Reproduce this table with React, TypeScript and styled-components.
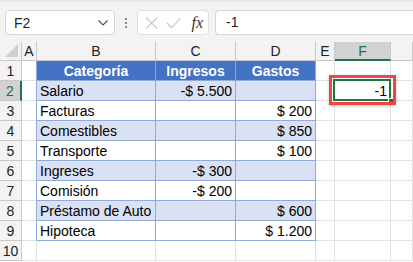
import React from 'react';
import styled, { createGlobalStyle, css } from 'styled-components';

const green = '#217346';
const tableBlue = '#8ea9db';
const grid = '#e1e1e1';
const headLine = '#c8c8c8';

const GlobalStyle = createGlobalStyle`
  html, body {
    margin: 0;
    padding: 0;
    background: #ffffff;
    font-family: 'Liberation Sans', Arial, sans-serif;
    overflow: hidden;
  }
  * { box-sizing: border-box; }
`;

const Window = styled.div`
  display: flex;
  flex-direction: column;
  width: 413px;
  height: 262px;
  background: #ffffff;
`;

const FormulaBar = styled.div`
  display: flex;
  align-items: center;
  height: 42px;
  padding: 7px 0 6px 5px;
  background: #f3f3f3;
  border-top: 2px solid #e6e6e6;
`;

const NameBox = styled.div`
  display: flex;
  align-items: center;
  justify-content: space-between;
  width: 110px;
  height: 25px;
  padding: 0 6px 0 8px;
  background: #ffffff;
  border: 1px solid #d6d6d6;
  border-radius: 4px;
  font-size: 14px;
  color: #1f1f1f;
`;

const Grip = styled.div`
  display: flex;
  flex-direction: column;
  gap: 2px;
  width: 22px;
  align-items: center;
`;

const GripDot = styled.span`
  width: 2px;
  height: 2px;
  background: #8a8a8a;
`;

const FnBox = styled.div`
  display: flex;
  align-items: center;
  gap: 8px;
  width: 72px;
  height: 25px;
  padding: 0 5px 0 7px;
  background: #ffffff;
  border: 1px solid #e0e0e0;
  border-radius: 4px;
`;

const FxLabel = styled.span`
  font-family: 'Liberation Serif', 'Times New Roman', serif;
  font-style: italic;
  font-size: 16px;
  color: #333;
  margin-left: 2px;
`;

const FormulaInput = styled.div`
  flex: 1;
  height: 25px;
  margin-left: 6px;
  padding: 3px 10px;
  background: #ffffff;
  border: 1px solid #d6d6d6;
  border-right: none;
  border-radius: 4px 0 0 4px;
  font-size: 14px;
  color: #1f1f1f;
`;

const Sheet = styled.div`
  display: grid;
  grid-template-columns: 22px 15px 119px 80px 80px 19px 56px 1fr;
  grid-template-rows: 19px repeat(10, 20px);
  flex: 1;
  overflow: hidden;
`;

const Corner = styled.div`
  position: relative;
  background: #f3f3f3;
  border-right: 1px solid ${headLine};
  border-bottom: 1px solid ${headLine};

  &::after {
    content: '';
    position: absolute;
    right: 3px;
    bottom: 3px;
    border-style: solid;
    border-width: 0 0 13px 13px;
    border-color: transparent transparent #cfcfcf transparent;
  }
`;

const ColHead = styled.div<{ $active?: boolean }>`
  display: flex;
  align-items: center;
  justify-content: center;
  font-size: 14px;
  color: #222;
  background: #f3f3f3;
  border-right: 1px solid ${headLine};
  border-bottom: 1px solid ${headLine};

  ${({ $active }) =>
    $active &&
    css`
      background: #d2d2d2;
      color: ${green};
      border-bottom: 2px solid ${green};
    `}
`;

const RowHead = styled.div<{ $active?: boolean }>`
  display: flex;
  align-items: center;
  justify-content: center;
  font-size: 14px;
  color: #222;
  background: #f3f3f3;
  border-right: 1px solid ${headLine};
  border-bottom: 1px solid ${headLine};

  ${({ $active }) =>
    $active &&
    css`
      background: #d2d2d2;
      color: ${green};
      border-right: 2px solid ${green};
    `}
`;

type Tone = 'plain' | 'head' | 'band' | 'open';

const Cell = styled.div<{ $tone?: Tone; $align?: 'left' | 'right' | 'center'; $first?: boolean }>`
  display: flex;
  align-items: center;
  justify-content: ${({ $align }) =>
    $align === 'right' ? 'flex-end' : $align === 'center' ? 'center' : 'flex-start'};
  padding: 0 3px 0 3px;
  font-size: 14px;
  color: #000;
  white-space: nowrap;
  background: #ffffff;
  border-right: 1px solid ${grid};
  border-bottom: 1px solid ${grid};

  ${({ $tone }) =>
    $tone === 'head' &&
    css`
      background: #4472c4;
      color: #ffffff;
      font-weight: bold;
      border-right-color: ${tableBlue};
      border-bottom-color: ${tableBlue};
    `}
  ${({ $tone }) =>
    $tone === 'band' &&
    css`
      background: #d9e1f2;
      border-right-color: ${tableBlue};
      border-bottom-color: ${tableBlue};
    `}
  ${({ $tone }) =>
    $tone === 'plain' &&
    css`
      border-right-color: ${tableBlue};
      border-bottom-color: ${tableBlue};
    `}
`;

// The column just left of the table draws the table's left edge
const EdgeCell = styled(Cell)<{ $edge?: boolean }>`
  ${({ $edge }) => $edge && css`border-right-color: ${tableBlue};`}
`;

const ActiveCell = styled(Cell)`
  position: relative;
  overflow: visible;

  &::before {
    content: '';
    position: absolute;
    left: -2px;
    top: -2px;
    right: -1px;
    bottom: -1px;
    border: 2px solid ${green};
  }
`;

const FillHandle = styled.span`
  position: absolute;
  right: -4px;
  bottom: -4px;
  width: 6px;
  height: 6px;
  background: ${green};
  border: 1px solid #ffffff;
  z-index: 2;
`;

const Callout = styled.span`
  position: absolute;
  left: -6px;
  top: -6px;
  right: -6px;
  bottom: -5px;
  border: 3px solid #eb4747;
  box-shadow: 0 1px 3px rgba(0, 0, 0, 0.25);
  z-index: 3;
`;

const CellText = styled.span`
  position: relative;
  z-index: 1;
`;

const CrossIcon = () => (
  <svg width="14" height="14" viewBox="0 0 14 14">
    <path d="M1 1 L13 13 M13 1 L1 13" stroke="#c4c4c4" strokeWidth="1.2" fill="none" />
  </svg>
);

const CheckIcon = () => (
  <svg width="16" height="14" viewBox="0 0 16 14">
    <path d="M1 7 L6 12 L15 2" stroke="#c4c4c4" strokeWidth="1.2" fill="none" />
  </svg>
);

const Chevron = () => (
  <svg width="10" height="6" viewBox="0 0 10 6">
    <path d="M0.5 0.5 L5 5 L9.5 0.5" stroke="#555" strokeWidth="1.2" fill="none" />
  </svg>
);

type Row = { name: string; income?: string; spend?: string };

const rows: Row[] = [
  { name: 'Salario', income: '-$ 5.500' },
  { name: 'Facturas', spend: '$ 200' },
  { name: 'Comestibles', spend: '$ 850' },
  { name: 'Transporte', spend: '$ 100' },
  { name: 'Ingreses', income: '-$ 300' },
  { name: 'Comisión', income: '-$ 200' },
  { name: 'Préstamo de Auto', spend: '$ 600' },
  { name: 'Hipoteca', spend: '$ 1.200' },
];

const columns = ['A', 'B', 'C', 'D', 'E', 'F', ''];

const App = (): JSX.Element => (
  <Window>
    <GlobalStyle />
    <FormulaBar>
      <NameBox>
        <span>F2</span>
        <Chevron />
      </NameBox>
      <Grip>
        <GripDot />
        <GripDot />
        <GripDot />
      </Grip>
      <FnBox>
        <CrossIcon />
        <CheckIcon />
        <FxLabel>fx</FxLabel>
      </FnBox>
      <FormulaInput>-1</FormulaInput>
    </FormulaBar>

    <Sheet>
      <Corner />
      {columns.map((c, i) => (
        <ColHead key={`c${i}`} $active={c === 'F'}>
          {c}
        </ColHead>
      ))}

      <RowHead>1</RowHead>
      <EdgeCell $edge />
      <Cell $tone="head" $align="center">Categoría</Cell>
      <Cell $tone="head" $align="center">Ingresos</Cell>
      <Cell $tone="head" $align="center">Gastos</Cell>
      <Cell />
      <Cell />
      <Cell />

      {rows.map((r, i) => {
        const n = i + 2;
        const tone: Tone = n % 2 === 0 ? 'band' : 'plain';
        return (
          <React.Fragment key={r.name}>
            <RowHead $active={n === 2}>{n}</RowHead>
            <EdgeCell $edge />
            <Cell $tone={tone}>{r.name}</Cell>
            <Cell $tone={tone} $align="right">{r.income}</Cell>
            <Cell $tone={tone} $align="right">{r.spend}</Cell>
            <Cell />
            {n === 2 ? (
              <ActiveCell $align="right">
                <CellText>-1</CellText>
                <FillHandle />
                <Callout />
              </ActiveCell>
            ) : (
              <Cell />
            )}
            <Cell />
          </React.Fragment>
        );
      })}

      <RowHead>10</RowHead>
      <Cell />
      <Cell />
      <Cell />
      <Cell />
      <Cell />
      <Cell />
      <Cell />
    </Sheet>
  </Window>
);

export default App;
